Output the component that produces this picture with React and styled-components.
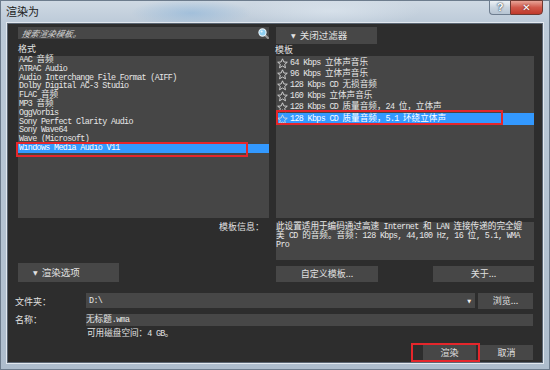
import React from 'react'
import styled, { createGlobalStyle } from 'styled-components'

const GlobalStyle = createGlobalStyle`
  html, body {
    margin: 0;
    padding: 0;
    background: #2d2d2d;
  }
  body {
    font-family: 'Noto Sans CJK SC', 'Liberation Sans', sans-serif;
  }
`

// split text into CJK runs so they get full width next to the narrow mono latin
const CJK = /([\u2E80-\u9FFF\u3000-\u303F\uFF00-\uFFEF]+)/
const Mixed = ({ text }) =>
  text.split(CJK).map((part, i) => (i % 2 === 1 ? <Han key={i}>{part}</Han> : part))

const formats = [
  'AAC 音频',
  'ATRAC Audio',
  'Audio Interchange File Format (AIFF)',
  'Dolby Digital AC-3 Studio',
  'FLAC 音频',
  'MP3 音频',
  'OggVorbis',
  'Sony Perfect Clarity Audio',
  'Sony Wave64',
  'Wave (Microsoft)',
  'Windows Media Audio V11'
]

const templates = [
  '64 Kbps 立体声音乐',
  '96 Kbps 立体声音乐',
  '128 Kbps CD 无损音频',
  '160 Kbps 立体声音乐',
  '128 Kbps CD 质量音频，24 位，立体声',
  '128 Kbps CD 质量音频，5.1 环绕立体声'
]

const description = [
  '此设置适用于编码通过高速 Internet 和 LAN 连接传递的完全媲',
  '美 CD 的音频。音频: 128 Kbps, 44,100 Hz, 16 位, 5.1, WMA',
  'Pro'
]

const StarIcon = () => (
  <svg width="11" height="11" viewBox="0 0 11 11">
    <polygon
      points="5.5,0.8 6.9,4 10.3,4.2 7.7,6.4 8.5,9.8 5.5,8 2.5,9.8 3.3,6.4 0.7,4.2 4.1,4"
      fill="none"
      stroke="#d8d8d8"
      strokeWidth="0.9"
      strokeLinejoin="round"
    />
  </svg>
)

const SearchIcon = () => (
  <svg width="11" height="11" viewBox="0 0 11 11">
    <line x1="6.8" y1="6.8" x2="10" y2="10" stroke="#9a9a9a" strokeWidth="2" strokeLinecap="round" />
    <circle cx="4.5" cy="4.5" r="3.6" fill="#8fd0f2" stroke="#e8f4fb" strokeWidth="1.1" />
    <circle cx="3.6" cy="3.5" r="1.1" fill="#e9f7ff" />
  </svg>
)

const App = () => {
  return (
    <>
      <GlobalStyle />
      <Window>
        <TitleBar>
          <Title>渲染为</Title>
          <Captions>
            <HelpButton>?</HelpButton>
            <CloseButton>✕</CloseButton>
          </Captions>
        </TitleBar>
        <Body>
          <Columns>
            <Column>
              <SearchBox>
                <Placeholder>搜索渲染模板。</Placeholder>
                <SearchIcon />
              </SearchBox>
              <Label>格式</Label>
              <FormatList>
                {formats.map((f) => (
                  <FormatRow key={f} selected={f === 'Windows Media Audio V11'}>
                    <Mixed text={f} />
                    {f === 'Windows Media Audio V11' && <Marker $w={232} $h={15} $top={-2} $left={-2} />}
                  </FormatRow>
                ))}
              </FormatList>
              <InfoLabel>模板信息：</InfoLabel>
              <ToggleButton $mt="auto" $h={19}>
                <Caret>▼</Caret>渲染选项
              </ToggleButton>
            </Column>
            <Column>
              <ToggleButton $h={17}>
                <Caret>▼</Caret>关闭过滤器
              </ToggleButton>
              <TemplateLabel>模板</TemplateLabel>
              <TemplateList>
                {templates.map((t, i) => (
                  <TemplateRow key={t} selected={i === templates.length - 1}>
                    <StarIcon />
                    <RowText>
                      <Mixed text={t} />
                    </RowText>
                    {i === templates.length - 1 && <Marker $w={227} $h={15} $top={-3} $left={0} />}
                  </TemplateRow>
                ))}
              </TemplateList>
              <Description>
                {description.map((line) => (
                  <DescLine key={line}>
                    <Mixed text={line} />
                  </DescLine>
                ))}
              </Description>
              <ButtonRow>
                <Button $w={102}>自定义模板...</Button>
                <Button $w={101}>关于...</Button>
              </ButtonRow>
            </Column>
          </Columns>
          <Fields>
            <FieldLabel>文件夹：</FieldLabel>
            <FolderRow>
              <Select>
                <MonoValue>D:\</MonoValue>
                <SelectArrow>▼</SelectArrow>
              </Select>
              <Button $w={55}>浏览...</Button>
            </FolderRow>
            <FieldLabel $mt={4}>名称：</FieldLabel>
            <NameInput $mt={4}>
              <MonoValue>
                <Mixed text="无标题.wma" />
              </MonoValue>
            </NameInput>
            <span />
            <DiskSpace>
              <Mixed text="可用磁盘空间：4 GB。" />
            </DiskSpace>
          </Fields>
          <Footer>
            <FooterButton>
              渲染
              <Marker $w={69} $h={19} $top={-2} $left={-12} />
            </FooterButton>
            <FooterButton>取消</FooterButton>
          </Footer>
        </Body>
      </Window>
    </>
  )
}

const Window = styled.div`
  width: 550px;
  height: 370px;
  box-sizing: border-box;
  padding: 0 5px 5px 5px;
  display: flex;
  flex-direction: column;
  background:
    radial-gradient(ellipse 60px 14px at 190px 12px, rgba(120, 170, 215, 0.45), transparent),
    radial-gradient(ellipse 90px 16px at 330px 10px, rgba(230, 238, 245, 0.5), transparent),
    linear-gradient(to bottom, #cfd9e3 0px, #bccad8 22px, #aebdcd 100%);
  border: 1px solid #6d7c8d;
`

const TitleBar = styled.div`
  height: 21px;
  display: flex;
  align-items: flex-start;
  justify-content: space-between;
  flex-shrink: 0;
`

const Title = styled.div`
  font-size: 11px;
  color: #1b1b1b;
  padding: 3px 0 0 0;
  line-height: 14px;
`

const Captions = styled.div`
  display: flex;
  margin-top: -1px;
  margin-right: 1px;
`

const HelpButton = styled.div`
  width: 21px;
  height: 15px;
  box-sizing: border-box;
  border: 1px solid #6e7d8f;
  border-right: none;
  border-radius: 0 0 0 4px;
  background: linear-gradient(to bottom, #eef2f6, #c9d4df 50%, #b6c4d2);
  color: #fff;
  font: bold 11px 'Liberation Sans', sans-serif;
  text-align: center;
  line-height: 13px;
  text-shadow: 0 0 2px #2e3e50, 0 0 1px #2e3e50;
`

const CloseButton = styled.div`
  width: 33px;
  height: 15px;
  box-sizing: border-box;
  border: 1px solid #6e3a32;
  border-radius: 0 0 4px 0;
  background: linear-gradient(to bottom, #e8a497, #d0584a 50%, #c03a2b);
  color: #fff;
  font: bold 10px 'DejaVu Sans', sans-serif;
  text-align: center;
  line-height: 13px;
  text-shadow: 0 0 2px #4a1410;
`

const Body = styled.div`
  flex: 1;
  background: #2d2d2d;
  border: 1px solid #e2e8ef;
  box-shadow: inset 0 0 0 1px #5b6673;
  padding: 4px 10px 3px 11px;
  display: flex;
  flex-direction: column;
  color: #dedede;
`

const Columns = styled.div`
  display: grid;
  grid-template-columns: 251px 258px;
  column-gap: 7px;
`

const Column = styled.div`
  display: flex;
  flex-direction: column;
`

const SearchBox = styled.div`
  height: 12px;
  background: #474747;
  display: flex;
  align-items: center;
  justify-content: space-between;
  padding: 0 0 0 4px;
`

const Placeholder = styled.span`
  font-size: 8.5px;
  font-style: italic;
  color: #d0d0d0;
  line-height: 12px;
  transform: skewX(-12deg);
`

const Label = styled.div`
  height: 17px;
  box-sizing: border-box;
  padding-top: 4px;
  font-size: 9px;
  line-height: 11px;
  color: #e4e4e4;
`

const TemplateLabel = styled(Label)`
  height: 12px;
  padding-top: 0;
  margin-left: -1px;
`

const monoText = `
  font-family: 'Liberation Mono', monospace;
  font-size: 8.4px;
  letter-spacing: -0.65px;
`

const FormatList = styled.div`
  height: 162px;
  background: #464646;
  ${monoText}
`

const FormatRow = styled.div`
  position: relative;
  height: 8.8px;
  line-height: 8.8px;
  padding-left: 1px;
  white-space: nowrap;
  color: ${(props) => (props.selected ? '#ffffff' : '#e6e6e6')};
  background: ${(props) => (props.selected ? '#3399ff' : 'transparent')};
`

const Han = styled.span`
  font-family: 'Noto Sans CJK SC', sans-serif;
  font-size: 8.6px;
  letter-spacing: 0;
  line-height: 0;
`

const Marker = styled.div`
  position: absolute;
  top: ${(props) => props.$top}px;
  left: ${(props) => props.$left}px;
  width: ${(props) => props.$w}px;
  height: ${(props) => props.$h}px;
  border: 2px solid #e5262b;
  box-sizing: border-box;
  pointer-events: none;
`

const InfoLabel = styled.div`
  height: 14px;
  text-align: right;
  padding-right: 5px;
  font-size: 9px;
  line-height: 18px;
  color: #e0e0e0;
`

const ToggleButton = styled.div`
  width: 101px;
  height: ${(props) => props.$h}px;
  margin-top: ${(props) => props.$mt || 0};
  background: #474747;
  font-size: 9.5px;
  line-height: ${(props) => props.$h}px;
  color: #e2e2e2;
  padding-left: 15px;
  box-sizing: border-box;
`

const Caret = styled.span`
  font-family: 'DejaVu Sans', sans-serif;
  font-size: 6px;
  margin-right: 4px;
  vertical-align: 1px;
`

const TemplateList = styled.div`
  height: 162px;
  background: #464646;
  padding-top: 1.5px;
  box-sizing: border-box;
  ${monoText}
`

const TemplateRow = styled.div`
  position: relative;
  height: 11.2px;
  display: flex;
  align-items: center;
  gap: 2px;
  padding-left: 1px;
  white-space: nowrap;
  color: ${(props) => (props.selected ? '#ffffff' : '#e6e6e6')};
  background: ${(props) => (props.selected ? '#3399ff' : 'transparent')};
`

const RowText = styled.span`
  line-height: 11px;
`

const Description = styled.div`
  height: 38px;
  margin-top: 4px;
  background: #464646;
  box-sizing: border-box;
  padding-top: 1px;
  display: flex;
  flex-direction: column;
  ${monoText}
  color: #e8e8e8;
`

const DescLine = styled.div`
  height: 9px;
  line-height: 9px;
  white-space: nowrap;
`

const ButtonRow = styled.div`
  display: flex;
  justify-content: space-between;
  margin-top: 6px;
`

const Button = styled.div`
  width: ${(props) => props.$w}px;
  height: 16px;
  flex-shrink: 0;
  background: #474747;
  font-size: 9px;
  line-height: 16px;
  text-align: center;
  color: #e0e0e0;
`

const Fields = styled.div`
  display: grid;
  grid-template-columns: 71px 1fr;
  margin: 11px 0 0 -3px;
  align-items: center;
`

const FieldLabel = styled.div`
  font-size: 9px;
  color: #e0e0e0;
  margin-top: ${(props) => props.$mt || 0}px;
`

const FolderRow = styled.div`
  display: flex;
  gap: 3px;
`

const Select = styled.div`
  flex: 1;
  height: 15px;
  background: #474747;
  display: flex;
  align-items: center;
  justify-content: space-between;
  padding: 0 4px 0 3px;
`

const SelectArrow = styled.span`
  font-family: 'DejaVu Sans', sans-serif;
  font-size: 5px;
  color: #eeeeee;
`

const MonoValue = styled.span`
  ${monoText}
  line-height: 12px;
  color: #e8e8e8;
`

const NameInput = styled.div`
  height: 12px;
  margin-top: ${(props) => props.$mt || 0}px;
  background: #474747;
  display: flex;
  align-items: center;
  line-height: 12px;
`

const DiskSpace = styled.div`
  ${monoText}
  line-height: 12px;
  padding-left: 1px;
  margin-top: 2px;
  color: #e4e4e4;
`

const Footer = styled.div`
  display: flex;
  justify-content: flex-end;
  gap: 4px;
  margin-top: auto;
`

const FooterButton = styled.div`
  position: relative;
  width: 53px;
  height: 15px;
  background: #474747;
  font-size: 9px;
  line-height: 15px;
  text-align: center;
  color: #e2e2e2;
`

export default App
